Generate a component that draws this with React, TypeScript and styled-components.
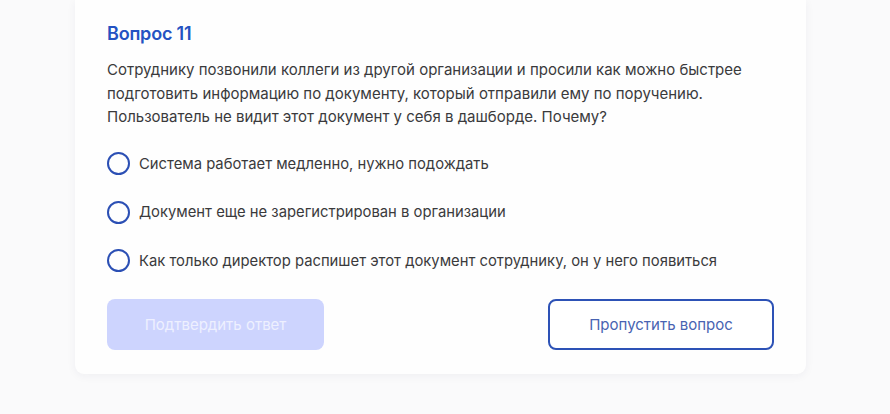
import React, { useState } from "react";
import styled, { createGlobalStyle } from "styled-components";

const GlobalStyle = createGlobalStyle`
  * { box-sizing: border-box; }
  html, body {
    margin: 0;
    padding: 0;
    background: #fafafb;
    font-family: Inter, "Noto Sans", Arial, sans-serif;
  }
`;

const Page = styled.div`
  width: 890px;
  height: 414px;
  overflow: hidden;
  padding-left: 75px;
`;

const Card = styled.div`
  width: 731px;
  background: #fefefe;
  border-radius: 0 0 9px 9px;
  box-shadow: 0 2px 10px rgba(30, 40, 80, 0.05);
  padding: 22px 32px 24px;
`;

const Title = styled.h2`
  margin: 0;
  font-size: 18px;
  line-height: 24px;
  font-weight: 600;
  color: #2452c2;
  letter-spacing: -0.2px;
`;

const Question = styled.p`
  margin: 12px 0 0;
  font-size: 15px;
  line-height: 23.5px;
  color: #3a3a3c;
`;

const Options = styled.div`
  display: flex;
  flex-direction: column;
  gap: 24.5px;
  margin-top: 23px;
`;

const Option = styled.label`
  display: flex;
  align-items: center;
  gap: 9px;
  cursor: pointer;
  font-size: 14.8px;
  line-height: 24px;
  color: #3a3a3c;
`;

const Radio = styled.span<{ $checked: boolean }>`
  width: 23px;
  height: 23px;
  border-radius: 50%;
  border: 2px solid #2b4fb4;
  flex-shrink: 0;
  display: flex;
  align-items: center;
  justify-content: center;
  &::after {
    content: "";
    width: 11px;
    height: 11px;
    border-radius: 50%;
    background: #2b4fb4;
    display: ${({ $checked }) => ($checked ? "block" : "none")};
  }
`;

const Actions = styled.div`
  display: flex;
  justify-content: space-between;
  margin-top: 26px;
`;

const PrimaryButton = styled.button`
  width: 217px;
  height: 51px;
  border: none;
  border-radius: 8px;
  background: #cdd4fe;
  color: #eef0ff;
  font-family: inherit;
  font-size: 15px;
  &:disabled { cursor: default; }
`;

const OutlineButton = styled.button`
  width: 226px;
  height: 51px;
  border: 2px solid #2d52b6;
  border-radius: 8px;
  background: #ffffff;
  color: #4863b2;
  font-family: inherit;
  font-size: 15px;
  cursor: pointer;
`;

const answers = [
  "Система работает медленно, нужно подождать",
  "Документ еще не зарегистрирован в организации",
  "Как только директор распишет этот документ сотруднику, он у него появиться",
];

export default function App() {
  const [selected, setSelected] = useState<number | null>(null);
  return (
    <>
      <GlobalStyle />
      <Page>
        <Card>
          <Title>Вопрос 11</Title>
          <Question>
            Сотруднику позвонили коллеги из другой организации и просили как можно быстрее
            <br />
            подготовить информацию по документу, который отправили ему по поручению.
            <br />
            Пользователь не видит этот документ у себя в дашборде. Почему?
          </Question>
          <Options>
            {answers.map((a, i) => (
              <Option key={i} onClick={() => setSelected(i)}>
                <Radio $checked={selected === i} />
                {a}
              </Option>
            ))}
          </Options>
          <Actions>
            <PrimaryButton disabled={selected === null}>Подтвердить ответ</PrimaryButton>
            <OutlineButton>Пропустить вопрос</OutlineButton>
          </Actions>
        </Card>
      </Page>
    </>
  );
}
